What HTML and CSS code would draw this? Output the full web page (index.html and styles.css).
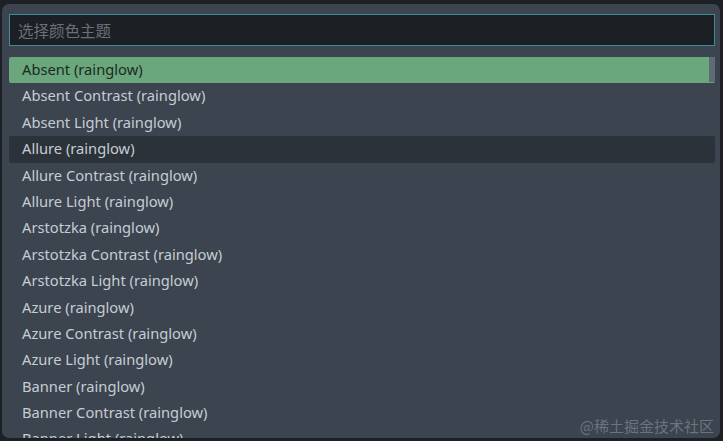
FILE: index.html
```html
<!DOCTYPE html>
<html lang="zh">
<head>
<meta charset="utf-8">
<link rel="stylesheet" href="styles.css">
</head>
<body>
<div class="panel">
  <div class="search"><span class="placeholder">选择颜色主题</span></div>
  <ul class="list">
    <li class="item selected">Absent (rainglow)<span class="thumb"></span></li>
    <li class="item">Absent Contrast (rainglow)</li>
    <li class="item">Absent Light (rainglow)</li>
    <li class="item hover">Allure (rainglow)</li>
    <li class="item">Allure Contrast (rainglow)</li>
    <li class="item">Allure Light (rainglow)</li>
    <li class="item">Arstotzka (rainglow)</li>
    <li class="item">Arstotzka Contrast (rainglow)</li>
    <li class="item">Arstotzka Light (rainglow)</li>
    <li class="item">Azure (rainglow)</li>
    <li class="item">Azure Contrast (rainglow)</li>
    <li class="item">Azure Light (rainglow)</li>
    <li class="item">Banner (rainglow)</li>
    <li class="item">Banner Contrast (rainglow)</li>
    <li class="item">Banner Light (rainglow)</li>
  </ul>
  <div class="watermark">@稀土掘金技术社区</div>
</div>
</body>
</html>
```
FILE: styles.css
```css
html, body {
  margin: 0;
  padding: 0;
  background: #1d2126;
  height: 441px;
  overflow: hidden;
}
body {
  padding: 4px 3px 0 2px;
  box-sizing: border-box;
  font-family: "Noto Sans", "Noto Sans CJK SC", sans-serif;
}
.panel {
  position: relative;
  background: #3c4450;
  border-radius: 7px;
  height: 434px;
  padding: 10px 3px 0 7px;
  box-sizing: border-box;
  overflow: hidden;
}
.search {
  height: 32px;
  box-sizing: border-box;
  background: #1c1f23;
  border: 1px solid #3a8c98;
  padding: 0 8px;
  display: flex;
  align-items: center;
  margin-right: 2px;
}
.placeholder {
  color: #6a7078;
  font-size: 15.5px;
  font-family: "Noto Sans CJK SC", sans-serif;
}
.list {
  list-style: none;
  margin: 11px 0 0 0;
  padding: 0;
}
.item {
  position: relative;
  height: 26.4px;
  line-height: 25px;
  padding-left: 13px;
  color: #c6ccd3;
  font-size: 14.7px;
  white-space: nowrap;
  margin-right: 2px;
}
.item.selected {
  background: #6aa77c;
  color: #1d2a22;
  border-radius: 2px;
}
.item.hover {
  background: #2b323a;
  border-radius: 2px;
}
.thumb {
  position: absolute;
  right: 0;
  top: 0;
  width: 6px;
  height: 25px;
  background: #5f6b73;
}
.watermark {
  position: absolute;
  right: 6px;
  bottom: 2px;
  color: rgba(150, 158, 168, 0.55);
  font-size: 15px;
  font-family: "Noto Sans CJK SC", sans-serif;
}
```
